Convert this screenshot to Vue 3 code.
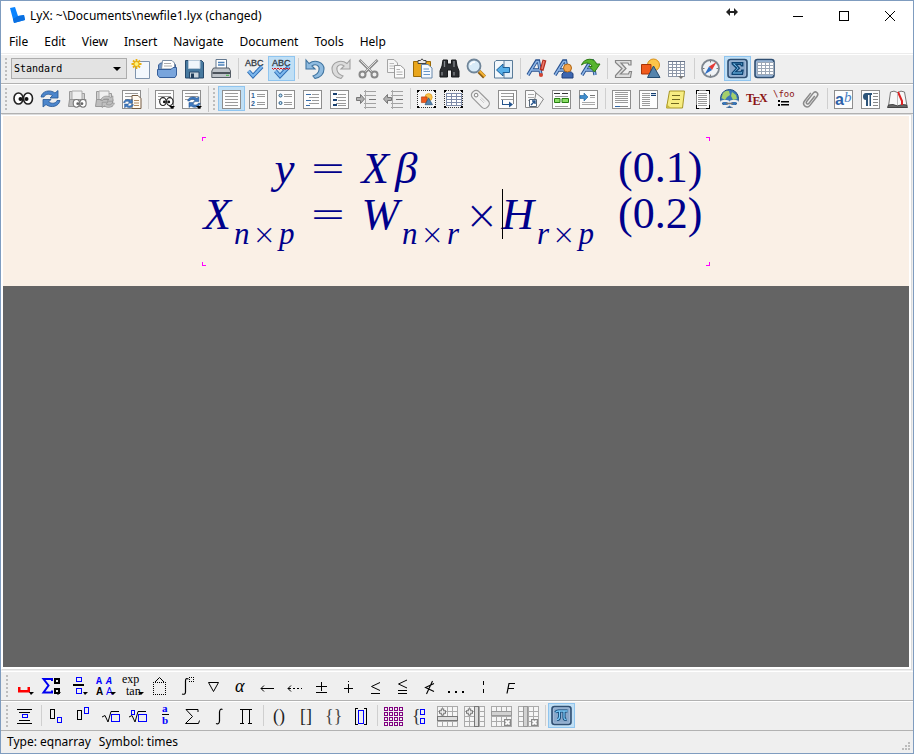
<script setup>
import { ref } from 'vue'

const style = ref('Standard')
const menus = ['File', 'Edit', 'View', 'Insert', 'Navigate', 'Document', 'Tools', 'Help']

/* ---- drawing helpers (21 x 21 canvas) ---- */
const ln = (color, ...segs) =>
  `<path shape-rendering="crispEdges" fill="none" stroke="${color}" d="${segs.map(([a, b, y]) => `M${a} ${y}.5H${b}`).join('')}"/>`
const box = (x, y, w, h, stroke, fill = 'none') =>
  `<rect shape-rendering="crispEdges" x="${x}.5" y="${y}.5" width="${w}" height="${h}" stroke="${stroke}" fill="${fill}"/>`
const line = (d, stroke = '#000', w = 1, extra = '') =>
  `<path d="${d}" fill="none" stroke="${stroke}" stroke-width="${w}" ${extra}/>`
const crisp = (d, stroke = '#000', w = 1) => line(d, stroke, w, 'shape-rendering="crispEdges"')
const dash = (d, stroke = '#000') => line(d, stroke, 1, 'stroke-dasharray="1 1"')
const shape = (d, fill, stroke = 'none', w = 1) =>
  `<path d="${d}" fill="${fill}" stroke="${stroke}" stroke-width="${w}"/>`
const txt = (x, y, size, s, fill = '#000', family = 'Liberation Serif, serif', extra = '') =>
  `<text x="${x}" y="${y}" font-size="${size}" fill="${fill}" font-family="${family}" ${extra}>${s}</text>`

const paper = `<rect x="1.5" y="2.5" width="18" height="18" fill="#fdfdfd" stroke="#8e8e8e"/>`
const textLines = (a, b, ys, c = '#9a9a9a') => ln(c, ...ys.map((y) => [a, b, y]))
const tick = line('M4.500 13L9 18L18 8.500', '#2f6db5', 4) + line('M4.500 13L9 18L18 8.500', '#7db8ee', 2)
const letters = txt(1, 8, 9, 'ABC', '#333a44', 'Liberation Sans, sans-serif', 'stroke="#333a44" stroke-width=".3"')
const undoPath = 'M2 2V11H11L8 8C12 5 16 8 15 12C14.500 15 12 17 9 18L11 20.500C16 19.500 20 16 20 11C20 4 11 1 5 5.500Z'
const swirl = (c1, c2) =>
  shape('M1 9C2 3 10 1 15 5L18 2.500V10H10L12.500 7.500C9 5.500 5 6 4 9Z', c1, c2, 0.8) +
  shape('M20 12.500C19 18.500 11 20.500 6 16.500L3 19V11.500H11L8.500 14C12 16 16 15.500 17 12.500Z', c1, c2, 0.8)
const small = (s, x, y, k) => `<g transform="translate(${x} ${y}) scale(${k})">${s}</g>`
const eyes =
  '<ellipse cx="5.500" cy="10.500" rx="4.500" ry="5.500" fill="#fff" stroke="#222" stroke-width="1.600"/><ellipse cx="15" cy="10.500" rx="4.500" ry="5.500" fill="#fff" stroke="#222" stroke-width="1.600"/><circle cx="7.500" cy="11" r="2" fill="#111"/><circle cx="13.500" cy="11" r="2" fill="#111"/>'
const greyEyes = eyes.replaceAll('#222', '#777').replaceAll('#111', '#666')
const greyFolder =
  shape('M2.500 17V3.500H8L9.500 5.500H17.500V17Z', '#d2d2d2', '#9a9a9a') +
  shape('M5 3H15V12H5Z', '#f0f0f0', '#aaa') +
  shape('M1.500 18.500L2.500 11.500H19L18 18.500Z', '#bdbdbd', '#999')
const drop = (x, y, c = '#000') => shape(`M${x} ${y}h6l-3 3z`, c)
const bigA = line('M2 17L10.500 3H12.500L15 17M5 12H14.500', '#27508f', 3.4) + line('M2 17L10.500 3.500H12.500L15 17M5 12H14.500', '#8db5e6', 1.5)
const sigma = 'M2.500 2.500H18V7H16L15 5H8L13 10.500L7.500 16H15.500L16.500 13.500H18.500L17.500 19.500H2.500V17.500L9 10.500L2.500 4.500Z'
const shapes =
  '<circle cx="13.500" cy="7" r="6" fill="#fbc54a" stroke="#d98f12"/>' +
  shape('M1.500 6.500H11V16H1.500Z', '#f05a1c', '#a83508') +
  shape('M13.500 8L20 19.500H7.500Z', '#5483ac', '#214a70')
const grid = (x, y, cw, ch, nx, ny, stroke, fill = '#fff') => {
  let d = ''
  for (let i = 0; i <= nx; i++) d += `M${x + i * cw}.5 ${y}V${y + ny * ch + 1}`
  for (let j = 0; j <= ny; j++) d += `M${x} ${y + j * ch}.5H${x + nx * cw + 1}`
  return `<rect x="${x}" y="${y}" width="${nx * cw}" height="${ny * ch}" fill="${fill}"/>` + crisp(d, stroke)
}
const tile = '<rect x="1" y="1.500" width="19" height="18" rx="2.500" fill="#8aa8ca" stroke="#304f72" stroke-width="1.600"/><rect x="2.500" y="3" width="16" height="15" rx="1" fill="none" stroke="#a4bedb" stroke-width=".8"/>'
const dotted = '<rect x="2" y="3" width="17" height="16" fill="#f8f8f8"/>' + dash('M1 2.500H20M1 19.500H20M1.500 2V20M19.500 2V20', '#333') + shape('M1 2h2v2h-2zM18 2h2v2h-2zM1 18h2v2h-2zM18 18h2v2h-2z', '#000')
const indent = textLines(8, 20, [3, 7, 15, 19], '#a2a2a2') + textLines(13, 20, [11], '#777') + crisp('M9.500 2V21', '#aaa')
const plus = line('M5.500 3.500V10.500M2 7H9', '#777', 3.4) + line('M5.500 4.500V9.500M3 7H8', '#eee', 1.4)
const erase = box(13, 14, 6, 6, '#888', '#aaa') + line('M14.500 15.500L18.500 19.500M18.500 15.500L14.500 19.500', '#fff', 1.6)
const cells = grid(0, 1, 5, 5, 4, 4, '#aaa', '#f5f5f5')
const piPath = 'M4.500 7.500Q5.500 6 7.500 6H16.500M8.500 6.500V11.500Q8.500 14.500 6 14.500M13 6.500V12.500Q13 15 15.500 14'

const icons = {
  new: shape('M5.500 3.500H19.500V20.500H5.500Z', '#f3f8fd', '#7f94ad') + line('M6.500 1V11M1.500 6H11.500M3 2.500L10 9.500M10 2.500L3 9.500', '#eab010', 1.8) + '<circle cx="6.500" cy="6" r="2" fill="#fff27a"/>',
  open: shape('M1.500 17V7L3.500 5H17L18.500 7V17Z', '#7097c8', '#3c6299') + shape('M4.500 11L5.500 2.500H15L17.500 5V11Z', '#fff', '#7b8ea5') + line('M7 5.500H14M7 8H15', '#aaa') + shape('M.5 11.500H14L16 9.500H19.500V17L18 19.500H2.500L.5 17Z', '#79a5dc', '#365f9a'),
  save: shape('M1.500 2.500H17.500L19.500 4.500V20H1.500Z', '#47799f', '#27496b') + shape('M4.500 2.500H16V10.500H4.500Z', '#f0f6fb', '#b6c8d8') + shape('M5.500 14H15V20H5.500Z', '#c9d4dc', '#27496b') + shape('M7 15.500H10V20H7Z', '#213e5c'),
  print: shape('M5 1.500H15.500V11H5Z', '#fff', '#63788f') + line('M7 4.500H13.500M7 7H13.500', '#4a80b9', 1.3) + shape('M2.500 10H18L19.500 13V19.500H.8V13Z', '#bec3c8', '#555d66') + shape('M1.500 14H19V16H1.500Z', '#4c535b') + shape('M15 16.800h3v1h-3z', '#41b844'),
  spell: letters + tick,
  spellLive: letters + tick + line('M1 10l1.500 1.500l1.500-1.500l1.500 1.500l1.500-1.500l1.500 1.500l1.500-1.500l1.500 1.500l1.500-1.500l1.500 1.500l1.500-1.500l1.500 1.500l1.500-1.500', '#d11'),
  undo: shape(undoPath, '#8fbbe0', '#3e739f', 1.1),
  redo: `<g transform="translate(21 0) scale(-1 1)">${shape(undoPath, '#dcdcdc', '#a0a0a0', 1.1)}</g>`,
  cut: line('M1.500 2L14.500 15M19.500 2L6.500 15', '#8a8a8a', 2.6) + line('M2.500 2.500L14.500 14.500M18.500 2.500L6.500 14.500', '#ddd', 1) + '<circle cx="4.500" cy="16.500" r="3" fill="none" stroke="#888" stroke-width="2"/><circle cx="16.500" cy="16.500" r="3" fill="none" stroke="#888" stroke-width="2"/>',
  copy: shape('M2.500 1.500H9L12.500 5V14.500H2.500Z', '#f5f5f5', '#a5a5a5') + line('M4.500 5.500H9M4.500 8H10M4.500 10.500H10', '#bbb') + shape('M9.500 7.500H15.500L19.500 11V20H9.500Z', '#fafafa', '#999') + line('M11.500 11.500H15M11.500 14H17.500M11.500 16.500H17.500', '#b0b0b0'),
  paste: shape('M1.500 3.500H18.500V18.500H1.500Z', '#e9a61c', '#9b6a06') + shape('M6 4.500V2.500H8.500L10 .8L11.500 2.500H14V5.500H6Z', '#e8e8e8', '#444') + shape('M9.500 6.500H16L20 10V20H9.500Z', '#f4f9ff', '#6888ab') + line('M11.500 11H17M11.500 13.500H18M11.500 16.500H18', '#6796c9'),
  find: shape('M4 2H8.500V6H12.500V2H17L18 8L20 13V19H12.500V12H8.500V19H1V13L3 8Z', '#2b2d30', '#17181a') + line('M5.500 3V9M15 3V9M3 14V17.500M15 14V17.500', '#85898e', 1.3),
  zoom: line('M13 13.500L18.500 19', '#8d5d12', 4) + line('M13.500 13L19 18.500', '#f3b234', 2.2) + '<circle cx="8" cy="8" r="6.500" fill="#d8ebf8" stroke="#6f8599" stroke-width="1.800"/>' + line('M4.500 7C5 5 7 4 9 4', '#fff', 1.5),
  back: shape('M1.500 4L3 2.500H12L13 4H19.500V20H1.500Z', '#f3f8fc', '#597b99') + shape('M11 2.500H19.500V20H11Z', '#e5eff8', '#597b99') + shape('M3.500 12L10 6V9.500H16.500V14.500H10V18Z', '#56aee8', '#1c5f98'),
  aNote: bigA + line('M18.500 2L15.500 12.500', '#b52d20', 4) + line('M18 3L16 11', '#ec7b6c', 1.5) + '<circle cx="15" cy="17" r="2" fill="#d2432f"/>',
  aUser: bigA + shape('M9 20V16Q10 13.500 14.500 13.500Q19.500 13.500 20 16V20Z', '#3c66b0', '#1f3f7c') + '<circle cx="14.500" cy="10" r="4" fill="#f3a54f" stroke="#ad6716"/>',
  aNext: bigA + shape('M1.500 7C4 -.5 15 -.5 16.500 6H20L14.500 14L9 8.500H12C11 4.500 5 4 1.500 7Z', '#57b52e', '#2c7a12'),
  sigmaGrey: shape(sigma, '#dedede', '#858585', 1.2),
  graphic: shapes,
  table: grid(1, 3, 4, 3, 4, 5, '#8d97a8', '#fff') + crisp('M1 3.500H18', '#69758a', 1) + drop(11, 18, '#777'),
  compass: '<circle cx="10.500" cy="10.500" r="8.500" fill="#f0f3f6" stroke="#7f8790" stroke-width="1.800"/>' + shape('M16.500 4L9 8.500L12 12Z', '#e43b36') + shape('M4.500 16.500L9 8.500L12 12Z', '#2f6fc4') + line('M10.500 3V4.500M10.500 16.500V18M3 10.500H4.500M16.500 10.500H18', '#777'),
  mathBar: tile + `<g transform="translate(3.500 3) scale(.68)">${shape(sigma, '#7ccaf8', '#0d4372', 2)}</g>`,
  tableBar: tile + grid(3, 4, 4, 3, 4, 4, '#9ba7b6', '#fff'),

  eyes,
  refresh: swirl('#4c86cc', '#245693'),
  folderEyes: greyFolder + small(greyEyes, 5.5, 8, 0.7),
  folderRefresh: greyFolder + small(swirl('#c0c0c0', '#888'), 6, 6, 0.72),
  docRefresh: paper + textLines(4, 17, [5, 8, 11]) + shape('M11 7.500H17L20 10.500V20.500H11Z', '#fffaf2', '#765d43') + line('M13 12.500H18M13 15H18M13 17.500H18', '#b08960') + small(swirl('#3f7ac1', '#1d4c86'), 2, 10, 0.52),
  docEyes: paper + textLines(4, 17, [5, 8, 11]) + small(eyes, 5, 6, 0.72) + drop(15, 18),
  docUpdate: paper + textLines(4, 17, [5, 8, 11]) + small(swirl('#3f7ac1', '#1d4c86'), 6, 7, 0.66) + drop(15, 18),
  para: paper + textLines(4, 17, [5, 8, 11, 14, 17]),
  numbered: paper + txt(3, 10, 7, '1', '#2d5c93', 'Liberation Sans, sans-serif', 'font-weight="bold"') + txt(3, 18, 7, '2', '#2d5c93', 'Liberation Sans, sans-serif', 'font-weight="bold"') + textLines(9, 17, [6, 8, 14, 16]),
  bullets: paper + '<circle cx="5.500" cy="7.500" r="1.500" fill="#bfe0f5" stroke="#2d5c83"/><circle cx="5.500" cy="15" r="1.500" fill="#bfe0f5" stroke="#2d5c83"/>' + textLines(9, 17, [6, 8, 14, 16]),
  listing: paper + ln('#386ca8', [4, 9, 6], [4, 9, 12], [4, 8, 17]) + textLines(10, 17, [6, 9, 12, 15]) + textLines(7, 17, [9, 15]),
  descr: paper + ln('#173f70', [4, 8, 5], [4, 8, 6], [4, 8, 11], [4, 8, 12], [4, 8, 16], [4, 8, 17]) + textLines(9, 17, [6, 12, 17]) + textLines(7, 17, [9, 15]),
  indentR: indent + shape('M.5 9.500H4.500V6.500L8.500 11L4.500 15.500V12.500H.5Z', '#b0b0b0', '#777'),
  indentL: indent + shape('M8.500 9.500H4.500V6.500L.5 11L4.500 15.500V12.500H8.500Z', '#b0b0b0', '#777'),
  figFloat: dotted + small(shapes, 4.5, 5, 0.6),
  tabFloat: dotted + grid(3, 5, 5, 3, 3, 4, '#7e8ba8'),
  label: '<g transform="rotate(45 10 11)"><rect x="0" y="6.500" width="21" height="9" rx="4" fill="#f2f2f2" stroke="#999" stroke-width="1.200"/><circle cx="4.500" cy="11" r="1.800" fill="#fff" stroke="#888"/></g>' + line('M10 11L14 15M11 9.500L15 13.500', '#ccc'),
  xref: paper + textLines(4, 17, [5, 8, 11]) + crisp('M5.500 12V16.500H13', '#24548d', 1) + shape('M12 13.500L16 16.500L12 19.500Z', '#24548d') + crisp('M16.500 5V16', '#888'),
  cite: shape('M1.500 2.500H10L12 5V19.500H1.500Z', '#fafafa', '#888') + textLines(4, 10, [6, 9, 12], '#aaa') + shape('M12 5L19.500 11L14 19.500H9Z', '#f5f5f5', '#888') + shape('M5.500 11.500H12.500V18.500H5.500Z', '#fff', '#567') + line('M7 17L11 13M8 13H11V16', '#24548d', 1.4),
  index: paper + textLines(4, 17, [8, 18]) + shape('M3.500 10.500H9V14.500H3.500ZM11 10.500H17.500V14.500H11Z', '#89dd64', '#277e12') + ln('#333', [3, 9, 5], [11, 17, 5]),
  nomencl: paper + shape('M2 7.500H6V5L10 9L6 13V10.500H2Z', '#3f8ccc', '#1a5f9a', 0.6) + ln('#777', [12, 17, 7]) + ln('#aaa', [12, 17, 9], [4, 17, 14], [4, 17, 16]),
  footnote: paper + textLines(4, 17, [4, 6, 8, 10, 12, 14]) + ln('#2f65a4', [4, 9, 18]) + ln('#888', [9, 17, 18]),
  margin: paper + textLines(4, 12, [5, 7, 9, 11, 13, 15, 17]) + ln('#173f70', [13, 18, 5], [13, 18, 7]) + textLines(13, 18, [6], '#c8d8ea'),
  note: shape('M4.500 3H19.500L17.500 20H1.500Z', '#f7ed82', '#a79624') + shape('M1.500 20V16L6 20Z', '#c8b83f') + ln('#6f671e', [7, 15, 7], [7, 15, 11], [6, 14, 15]),
  boxed: box(4, 2, 13, 18, '#888', '#fff') + textLines(6, 15, [5, 7, 9, 11, 13, 15, 17], '#999') + crisp('M4 6V2.500H7M14 2.500H17.500V6M4 17V20.500H7M14 20.500H17.500V17'),
  web: '<circle cx="10.500" cy="10.500" r="9" fill="#3976b8" stroke="#1c4c80"/>' + shape('M4 5Q7 2 10 3L11 7L8 9L6 12L2.500 10ZM13 4L17 7L18 11L14 12L12 8Z', '#a3cf6c') + '<rect x="2" y="13" width="8" height="5" rx="2.500" fill="none" stroke="#eee" stroke-width="1.800"/><rect x="11" y="13" width="8" height="5" rx="2.500" fill="none" stroke="#eee" stroke-width="1.800"/>' + line('M7 15.500H14', '#777', 1.6),
  tex: txt(0, 14, 12, 'T<tspan dx="-1.500" dy="3">E</tspan><tspan dx="-1.500" dy="-3">X</tspan>', '#8c1414', 'Liberation Serif, serif', 'font-weight="bold"'),
  macro: txt(0, 9, 9, '\\foo', '#8c1414', 'DejaVu Sans Mono, monospace') + shape('M5 12h2v2h-2zM5 16h2v2h-2zM8 13h8v1.500h-8zM8 16h8v1.500h-8z', '#000'),
  clip: '<g transform="rotate(38 10.500 11)">' + line('M7 6V16Q7 20 10.500 20Q14 20 14 16V5Q14 2 11.500 2Q9 2 9 5V15Q9 17 10.500 17Q12 17 12 15V6', '#8a8a8a', 1.5) + '</g>',
  charStyle: paper + txt(2, 17, 16, 'a', '#2f62a8', 'Liberation Sans, sans-serif', 'font-weight="bold"') + txt(11, 14, 15, 'b', '#4a80c4', 'Liberation Serif, serif', 'font-style="italic"'),
  paraStyle: paper + shape('M12 5H6Q3 5 3 8.500Q3 12 6 12V18H8V7H9.500V18H11V7H12Z', '#2c5479') + textLines(13, 18, [5, 8, 11, 14, 17], '#888'),
  thesaurus: shape('M1.500 18L3.500 4Q7 2 10.500 4.500Q14 2 17.500 4L20 18Z', '#f8f8f8', '#777') + shape('M.5 19.500L1.500 17Q6 15.500 10.500 18Q15 15.500 19.500 17L20.500 19.500Z', '#666', '#444') + line('M11 4L15 13V17', '#d22', 2) + line('M10.500 5V17', '#bbb'),

  space: shape('M4 12H6.500V15H13.500V12H16V17.500H4Z', '#f00') + drop(15, 17).replace('h6', 'h5'),
  bigop: line('M11 6V4H2.500L7.500 10.500L2.500 17.500H11V15.500', '#0000f0', 2) + crisp('M14 4H18V8H14ZM14 14H18V18H14Z', '#000', 2) + drop(14, 17),
  fracMenu: box(8, 2, 5, 4, '#00f') + crisp('M5 10.500H16M5 9.500H16') + box(8, 13, 5, 5, '#00f') + drop(15, 17).replace('h6', 'h5'),
  fonts: txt(1, 9, 10, 'A', '#00f', 'Liberation Mono, monospace', 'font-weight="bold"') + txt(11, 9, 10, 'A', '#00f', 'Liberation Mono, monospace', 'font-style="italic" font-weight="bold"') + txt(1, 20, 10, 'A', '#000', 'Liberation Sans, sans-serif', 'font-weight="bold"') + txt(11, 20, 10, 'A', '#00f', 'Liberation Sans, sans-serif') + drop(15, 17),
  funcs: txt(0, 8, 12, 'exp') + txt(4, 20, 12, 'tan') + drop(16, 17),
  accent: dash('M4 7.500H17M4 19.500H17M4.500 7V20M16.500 7V20') + line('M6 7L10.500 2.500L15 7'),
  integral: line('M6 19Q9.500 20 9.500 17V6Q9.500 2.500 12.500 4', '#000', 1.2) + dash('M13 2.500H18M13 6.500H18M13.500 2V7M17.500 2V7'),
  nabla: line('M5.500 7.500H15.500L10.500 16.500Z'),
  alpha: txt(5, 17, 18, 'α', '#000', 'Liberation Serif, serif', 'font-style="italic"'),
  arrow: crisp('M4 13.500H17') + line('M7 10.500L4 13.500L7 16.500'),
  arrowDots: crisp('M4 13.500H7M9 13.500H11M13 13.500H15M17 13.500H18') + line('M7 10.500L4 13.500L7 16.500'),
  pm: crisp('M10.500 7V16M5 11.500H16M5 17.500H16'),
  dotplus: crisp('M10.500 9V18M6 13.500H15M10.500 6V7'),
  leq: line('M15 7.500L6.500 11.500L15 15.500') + crisp('M6 18.500H15'),
  leqq: line('M15 5L6.500 9L15 13') + crisp('M6 15.500H15M6 18.500H15'),
  nless: line('M15 8.500L6.500 12.500L15 16.500M13.500 6L7.500 19', '#000', 1.1),
  dots: shape('M2 16h2v2h-2zM9 16h2v2h-2zM16 16h2v2h-2z', '#000'),
  bar: crisp('M10.500 6V10M10.500 14V18'),
  digamma: line('M7 18.500L9 8.500H15M8 13.500H14', '#000', 1.2),

  display: crisp('M3 4.500H18M5 7.500H16M5 15.500H16M3 18.500H18') + box(8, 9, 5, 3, '#00f'),
  sub: box(3, 4, 4, 9, '#000') + box(10, 12, 4, 5, '#00f'),
  sup: box(3, 5, 4, 9, '#000') + box(10, 2, 4, 6, '#00f'),
  sqrt: line('M1 12L4 10.500L7 17L10 6.500') + crisp('M9.500 6.500H18') + box(10, 9, 8, 7, '#00f'),
  root: line('M1 12L4 10.500L7 17L10 6.500') + crisp('M9.500 6.500H18') + box(10, 9, 8, 7, '#00f') + box(3, 5, 3, 4, '#00f'),
  frac: txt(7, 7, 11, 'a', '#00f', 'Liberation Serif, serif', 'font-weight="bold"') + crisp('M7 9.500H14') + txt(7, 19, 11, 'b', '#00f', 'Liberation Serif, serif', 'font-weight="bold"'),
  sum: line('M16 7V4.500H4L10.500 11.500L3.500 18.500H16.500L17.500 15.500'),
  int: line('M7 18.500Q10 20 10.500 16V7Q11 3 13.500 4.500', '#000', 1.2),
  prod: crisp('M4 4.500H16M4 18.500H8M12 18.500H16M6.500 4V19M13.500 4V19'),
  parens: txt(4, 17, 18, '()', '#222'),
  brackets: txt(4, 17, 18, '[]', '#222'),
  braces: txt(2, 17, 18, '{}', '#444'),
  delim: crisp('M8 3.500H5.500V19.500H8M14 3.500H16.500V19.500H14') + box(8, 5, 5, 13, '#00f'),
  matrix: [0, 1, 2, 3].map((r) => [0, 1, 2, 3].map((c) => box(1 + c * 5, 2 + r * 5, 3, 3, '#800080')).join('')).join(''),
  cases: txt(2, 17, 18, '{', '#333') + box(10, 4, 4, 5, '#00f') + box(10, 13, 4, 5, '#00f'),
  addRow: cells + box(0, 11, 20, 4, '#777', '#ddd') + plus,
  addCol: cells + box(10, 1, 4, 20, '#777', '#ddd') + plus,
  delRow: cells + box(0, 6, 20, 4, '#999', '#d2d2d2') + erase,
  delCol: cells + box(5, 1, 4, 20, '#999', '#d2d2d2') + erase,
  pi: tile + line(piPath, '#0d4372', 3) + line(piPath, '#7ccaf8', 1.3),
}

const main = ['new', 'open', 'save', 'print', '|', 'spell', 'spellLive*', '|', 'undo', 'redo', 'cut', 'copy', 'paste', 'find', 'zoom', 'back', '|', 'aNote', 'aUser', 'aNext', '|', 'sigmaGrey', 'graphic', 'table', '|', 'compass', 'mathBar*', 'tableBar']
const view = ['eyes', 'refresh', 'folderEyes', 'folderRefresh', 'docRefresh', '|', 'docEyes', 'docUpdate']
const extra = ['para*', 'numbered', 'bullets', 'listing', 'descr', 'indentR', 'indentL', '|', 'figFloat', 'tabFloat', 'label', 'xref', 'cite', 'index', 'nomencl', '|', 'footnote', 'margin', 'note', 'boxed', 'web', 'tex', 'macro', 'clip', '|', 'charStyle', 'paraStyle', 'thesaurus']
const panels = ['space', 'bigop', 'fracMenu', 'fonts', 'funcs', 'accent', 'integral', 'nabla', 'alpha', 'arrow', 'arrowDots', 'pm', 'dotplus', 'leq', 'leqq', 'nless', 'dots', 'bar', 'digamma']
const math = ['display', '|', 'sub', 'sup', 'sqrt', 'root', 'frac', 'sum', 'int', 'prod', '|', 'parens', 'brackets', 'braces', 'delim', '|', 'matrix', 'cases', 'addRow', 'addCol', 'delRow', 'delCol', '|', 'pi*']

const group = (items, withStyle = false) => ({
  withStyle,
  items: items.map((s) => ({ name: s.replace('*', ''), on: s.endsWith('*'), sep: s === '|' })),
})
const topBars = [[group(main, true)], [group(view), group(extra)]]
const bottomBars = [[group(panels)], [group(math)]]
</script>

<template>
  <div class="window">
    <header class="titlebar">
      <svg class="logo" viewBox="0 0 18 18" aria-hidden="true">
        <path d="M1 1L6 0L9 9L15 8L16 13L5 16Z" fill="#0a84ff" />
        <path d="M5 16L4 12L9 9L15 8L16 13Z" fill="#0a6fe0" />
      </svg>
      <h1>LyX: ~\Documents\newfile1.lyx (changed)</h1>
      <svg class="resize" viewBox="0 0 12 8" aria-hidden="true">
        <path d="M0 4L4 0V3H8V0L12 4L8 8V5H4V8Z" fill="#222" />
      </svg>
      <button class="win" aria-label="Minimize"><svg viewBox="0 0 12 12"><path d="M1 6.500H11" /></svg></button>
      <button class="win" aria-label="Maximize"><svg viewBox="0 0 12 12"><path d="M1.500 1.500H10.500V10.500H1.500Z" /></svg></button>
      <button class="win" aria-label="Close"><svg viewBox="0 0 12 12"><path class="smooth" d="M1 1L11 11M11 1L1 11" /></svg></button>
    </header>

    <nav class="menubar">
      <button v-for="m in menus" :key="m">{{ m }}</button>
    </nav>

    <div v-for="(bar, b) in topBars" :key="'t' + b" class="toolbar" role="toolbar">
      <div v-for="(g, i) in bar" :key="i" class="group">
        <span class="grip"></span>
        <label v-if="g.withStyle" class="combo">
          <select v-model="style" aria-label="Paragraph style">
            <option>Standard</option>
          </select>
          <svg viewBox="0 0 8 4" aria-hidden="true"><path d="M0 0H8L4 4Z" /></svg>
        </label>
        <template v-for="(it, k) in g.items" :key="k">
          <span v-if="it.sep" class="sep"></span>
          <button v-else class="tool" :class="{ on: it.on }" :aria-label="it.name">
            <svg viewBox="0 0 21 21" v-html="icons[it.name]"></svg>
          </button>
        </template>
      </div>
    </div>

    <main class="editor">
      <section class="page">
        <div class="formula">
          <i class="corner tl"></i><i class="corner tr"></i><i class="corner bl"></i><i class="corner br"></i>
          <div class="rows">
            <span class="lhs"><var>y</var></span>
            <span class="rel">=</span>
            <span class="rhs"><var>X</var><var class="greek">β</var></span>
            <span class="num">(0.1)</span>
            <span class="lhs"><var>X</var><sub><var>n</var><b>×</b><var>p</var></sub></span>
            <span class="rel">=</span>
            <span class="rhs"><var>W</var><sub><var>n</var><b>×</b><var>r</var></sub><b class="op">×</b><i class="caret"></i><var>H</var><sub><var>r</var><b>×</b><var>p</var></sub></span>
            <span class="num">(0.2)</span>
          </div>
        </div>
      </section>
    </main>

    <div v-for="(bar, b) in bottomBars" :key="'b' + b" class="toolbar lower" role="toolbar">
      <div v-for="(g, i) in bar" :key="i" class="group">
        <span class="grip"></span>
        <template v-for="(it, k) in g.items" :key="k">
          <span v-if="it.sep" class="sep"></span>
          <button v-else class="tool" :class="{ on: it.on }" :aria-label="it.name">
            <svg viewBox="0 0 21 21" v-html="icons[it.name]"></svg>
          </button>
        </template>
      </div>
    </div>

    <footer class="status">
      <span>Type: eqnarray</span>
      <span>Symbol: times</span>
      <svg class="size-grip" viewBox="0 0 9 9" aria-hidden="true">
        <path d="M6 0h2v2h-2zM3 3h2v2h-2zM6 3h2v2h-2zM0 6h2v2h-2zM3 6h2v2h-2zM6 6h2v2h-2z" fill="#bcbcbc" />
      </svg>
    </footer>
  </div>
</template>

<style>
body {
  margin: 0;
  background: #efefef;
}
</style>

<style scoped>
* {
  box-sizing: border-box;
}
.window {
  min-height: 100vh;
  display: flex;
  flex-direction: column;
  border: 1px solid #7f9cbf;
  background: #efefef;
  color: #000;
  font: 12px/16px 'Noto Sans', sans-serif;
  overflow: hidden;
}
button {
  margin: 0;
  padding: 0;
  border: 0;
  background: none;
  font: inherit;
  color: inherit;
}
.titlebar {
  display: flex;
  align-items: center;
  height: 29px;
  padding-left: 8px;
  background: #fff;
}
.logo {
  width: 18px;
  height: 18px;
  margin-right: 3px;
}
h1 {
  flex: 1;
  margin: 0;
  font-size: 12px;
  font-weight: 400;
}
.resize {
  width: 12px;
  height: 8px;
  margin: 0 37px 8px 0;
}
.win {
  width: 46px;
  height: 28px;
  display: grid;
  place-items: center;
}
.win svg {
  width: 12px;
  height: 12px;
  fill: none;
  stroke: #000;
  shape-rendering: crispEdges;
}
.win .smooth {
  shape-rendering: auto;
}
.menubar {
  display: flex;
  height: 24px;
  padding-left: 8px;
  gap: 16px;
  background: #fff;
  border-bottom: 1px solid #ececec;
}
.toolbar {
  display: flex;
  height: 30px;
  padding: 1px 0;
  border-top: 1px solid #fff;
  border-bottom: 1px solid #b2b2b2;
}
.lower {
  padding-left: 1px;
}
.group {
  display: flex;
}
.group + .group {
  margin-left: 3px;
  border-left: 1px solid #c4c4c4;
}
.grip {
  width: 2px;
  height: 23px;
  margin: 2px 3px 0 4px;
  background: repeating-linear-gradient(#bdbdbd 0 2px, #efefef 2px 4px);
}
.tool {
  width: 27px;
  height: 25px;
  padding: 2px 3px;
  flex: none;
}
.tool.on {
  background: #c0dff5;
  box-shadow: inset 0 0 0 1px #90c5ef;
}
.tool svg {
  display: block;
  width: 21px;
  height: 21px;
  overflow: visible;
}
.sep {
  width: 6px;
  height: 21px;
  margin-top: 2px;
  background: linear-gradient(#cfcfcf, #cfcfcf) 3px 0 / 1px 100% no-repeat;
}
.combo {
  position: relative;
  width: 116px;
  height: 21px;
  margin: 2px 0 0 1px;
}
.combo select {
  appearance: none;
  display: block;
  width: 100%;
  height: 100%;
  padding: 0 2px;
  border: 1px solid #adadad;
  border-radius: 0;
  background: #e3e3e3;
  color: #000;
  font: 10px 'DejaVu Sans Mono', monospace;
}
.combo svg {
  position: absolute;
  right: 6px;
  top: 9px;
  width: 8px;
  height: 4px;
  pointer-events: none;
}
.editor {
  flex: 1;
  margin: 0 1px 1px 0;
  border: 1px solid #dcdcdc;
  border-left-color: #fff;
  padding: 1px 2px 2px 1px;
  background: #fff;
  display: flex;
  flex-direction: column;
}
.editor::after {
  content: '';
  flex: 1;
  background: #646464;
}
.page {
  display: flex;
  justify-content: center;
  padding: 21px 0 20px;
  background: #faf0e6;
}
.formula {
  position: relative;
  padding: 8px 8px 29px 2px;
  color: #00008b;
  font: 45px/46px 'Liberation Serif', serif;
}
.corner {
  position: absolute;
  width: 4px;
  height: 4px;
  border: 0 solid #f0f;
}
.tl { left: 0; top: 0; border-width: 1px 0 0 1px; }
.tr { right: 0; top: 0; border-width: 1px 1px 0 0; }
.bl { left: 0; bottom: 0; border-width: 0 0 1px 1px; }
.br { right: 0; bottom: 0; border-width: 0 1px 1px 0; }
.rows {
  display: grid;
  grid-template-columns: auto auto auto auto;
  grid-auto-rows: 46px;
  column-gap: 15px;
  white-space: nowrap;
}
.rows > span {
  height: 46px;
}
.lhs {
  text-align: right;
}
.greek {
  margin-left: 6px;
}
.num {
  padding-left: 9px;
  font-size: 44px;
}
.rel {
  font-family: 'DejaVu Sans', sans-serif;
  font-weight: 200;
  font-size: 44px;
}
b {
  margin: 0 3px;
  font-family: 'DejaVu Sans', sans-serif;
  font-weight: 200;
  font-size: 28px;
  line-height: 0;
}
b.op {
  margin: 0 3px 0 6px;
  font-size: 40px;
}
sub {
  margin-left: 3px;
  font-size: 31px;
  line-height: 0;
  vertical-align: -15px;
}
.caret {
  position: relative;
}
.caret::before {
  content: '';
  position: absolute;
  left: 0;
  bottom: 0;
  width: 1px;
  height: 50px;
  background: #000;
}
.status {
  display: flex;
  align-items: center;
  gap: 8px;
  height: 22px;
  padding: 0 2px 0 6px;
}
.size-grip {
  width: 9px;
  height: 9px;
  margin: 8px 0 0 auto;
}
</style>
